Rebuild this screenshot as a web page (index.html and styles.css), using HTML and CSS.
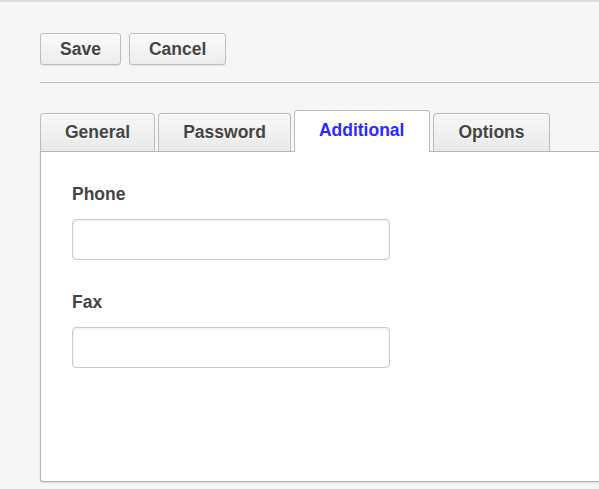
FILE: index.html
```html
<!DOCTYPE html>
<html>
<head>
<meta charset="utf-8">
<link rel="stylesheet" href="styles.css">
</head>
<body>
<div class="page">
  <div class="toolbar">
    <button class="btn">Save</button>
    <button class="btn">Cancel</button>
  </div>
  <div class="divider"></div>
  <div class="tabs">
    <div class="tab">General</div>
    <div class="tab">Password</div>
    <div class="tab active">Additional</div>
    <div class="tab">Options</div>
  </div>
  <div class="panel">
    <div class="field">
      <label class="label">Phone</label>
      <input class="input" type="text">
    </div>
    <div class="field">
      <label class="label">Fax</label>
      <input class="input" type="text">
    </div>
  </div>
</div>
</body>
</html>
```
FILE: styles.css
```css
html, body {
  margin: 0;
  padding: 0;
}
body {
  background: #f6f6f6;
  border-top: 2px solid #dddddd;
  font-family: "Liberation Sans", Arial, sans-serif;
  color: #444444;
  overflow: hidden;
  height: 487px;
}
.page {
  padding-left: 40px;
}
.toolbar {
  display: flex;
  gap: 8px;
  padding-top: 31px;
}
.btn {
  height: 32px;
  padding: 0 19px;
  border: 1px solid #bdbdbd;
  border-radius: 3px;
  background: linear-gradient(#fbfbfb, #ececec);
  font-family: "Liberation Sans", Arial, sans-serif;
  font-weight: bold;
  font-size: 17.5px;
  color: #444444;
  text-shadow: 0 1px 0 #ffffff;
  box-shadow: 0 1px 1px rgba(0,0,0,0.08);
}
.divider {
  margin-top: 17px;
  height: 1px;
  background: #bbbbbb;
}
.tabs {
  display: flex;
  align-items: flex-end;
  gap: 3px;
  margin-top: 27px;
  position: relative;
  z-index: 1;
}
.tab {
  padding: 8px 24px 8px;
  line-height: 21px;
  font-size: 17.5px;
  font-weight: bold;
  color: #444444;
  text-shadow: 0 1px 0 #ffffff;
  border: 1px solid #bbbbbb;
  border-bottom: none;
  border-radius: 4px 4px 0 0;
  background: linear-gradient(#f8f8f8, #e9e9e9);
}
.tab.active {
  padding: 9px 25px 11px 24px;
  margin-bottom: -1px;
  background: #ffffff;
  color: #2a2aff;
  text-shadow: none;
}
.panel {
  background: #ffffff;
  border: 1px solid #b5b5b5;
  border-right: none;
  border-radius: 0 0 0 3px;
  padding: 32px 0 113px 31px;
  box-shadow: 0 1px 2px rgba(0,0,0,0.12);
}
.field {
  display: flex;
  flex-direction: column;
  align-items: flex-start;
}
.field + .field {
  margin-top: 32px;
}
.label {
  font-size: 17.5px;
  line-height: 21px;
  font-weight: bold;
  color: #444444;
}
.input {
  margin-top: 14px;
  box-sizing: border-box;
  width: 318px;
  height: 41px;
  border: 1px solid #c9c9c9;
  border-radius: 4px;
  background: #ffffff;
  box-shadow: inset 0 1px 3px rgba(0,0,0,0.08);
  outline: none;
  padding: 0 8px;
  font-size: 15px;
}
```
